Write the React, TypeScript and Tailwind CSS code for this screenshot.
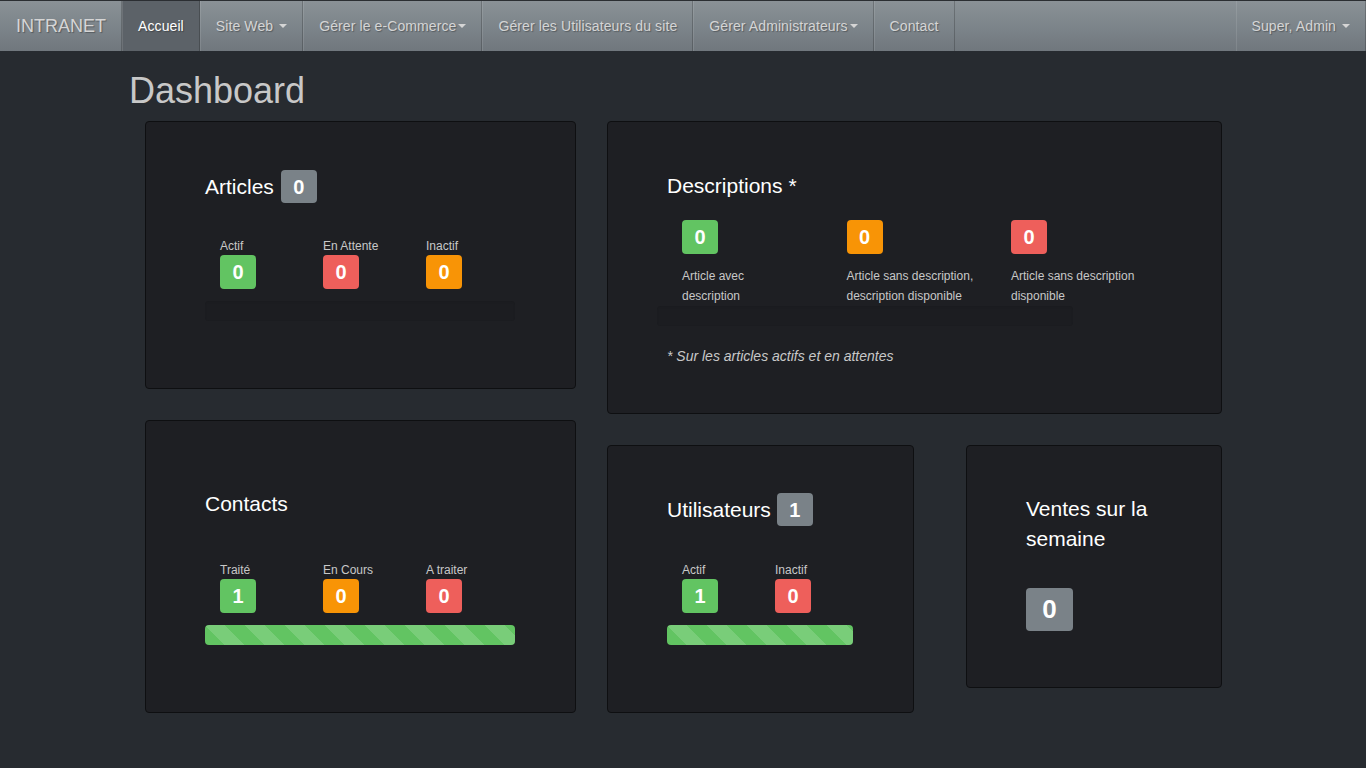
const font = "font-['Liberation_Sans',Arial,sans-serif]";

type Tone = 'green' | 'red' | 'orange' | 'gray';

const toneClass: Record<Tone, string> = {
  green: 'bg-[#62c462]',
  red: 'bg-[#ee5f5b]',
  orange: 'bg-[#f89406]',
  gray: 'bg-[#7a8288]',
};

function Badge({ value, tone }: { value: number; tone: Tone }) {
  return (
    <span
      className={`flex h-[34px] w-[36px] items-center justify-center rounded-[4px] text-[20px] font-bold text-white ${toneClass[tone]}`}
    >
      {value}
    </span>
  );
}

function Caret() {
  return (
    <span className="ml-[2px] inline-block h-0 w-0 border-x-[4px] border-t-[4px] border-x-transparent border-t-current align-middle" />
  );
}

function NavItem({ label, caret, space, active }: { label: string; caret?: boolean; space?: boolean; active?: boolean }) {
  return (
    <a
      className={`flex h-full items-center border-l border-l-[rgba(255,255,255,0.1)] border-r border-r-[rgba(0,0,0,0.2)] px-[15px] text-[14px] tracking-[0.1px] [text-shadow:1px_1px_1px_rgba(0,0,0,0.3)] ${
        active ? 'bg-[#5c6268] text-white' : 'text-[#d5d5d5]'
      }`}
    >
      {label}
      {caret && (space ? <span className="w-[4px]" /> : null)}
      {caret && <Caret />}
    </a>
  );
}

function Stat({ label, value, tone, narrow }: { label: string; value: number; tone: Tone; narrow?: boolean }) {
  return (
    <div className={`${narrow ? 'w-[93px]' : 'w-[103px]'} shrink-0`}>
      <div className="text-[12px] leading-[17px] text-[#c8c8c8]">{label}</div>
      <Badge value={value} tone={tone} />
    </div>
  );
}

function Progress({ full, className = '' }: { full?: boolean; className?: string }) {
  return (
    <div className={`h-[20px] overflow-hidden rounded-[4px] bg-[#1c1d21] shadow-[inset_0_1px_2px_rgba(0,0,0,0.08)] ${className}`}>
      {full && (
        <div className="h-full w-full bg-[#62c462] bg-[linear-gradient(45deg,rgba(255,255,255,.15)_25%,transparent_25%,transparent_50%,rgba(255,255,255,.15)_50%,rgba(255,255,255,.15)_75%,transparent_75%,transparent)] bg-[length:40px_40px]" />
      )}
    </div>
  );
}

function Card({ className = '', children }: { className?: string; children: React.ReactNode }) {
  return (
    <div className={`rounded-[4px] border border-[#0e0f11] bg-[#1e1f23] px-[59px] ${className}`}>{children}</div>
  );
}

export default function App() {
  return (
    <div className={`min-h-screen bg-[#272b30] ${font}`}>
      {/* Navbar */}
      <nav className="flex h-[51px] border-t border-t-[#2b2e32] bg-[linear-gradient(#8a9196,#7a8288_60%,#70777d)]">
        <a className="flex h-full items-center border-r border-r-[rgba(0,0,0,0.2)] pl-[16px] pr-[15px] text-[18px] text-[#d5d5d5] [text-shadow:1px_1px_1px_rgba(0,0,0,0.3)]">
          INTRANET
        </a>
        <NavItem label="Accueil" active />
        <NavItem label="Site Web" caret space />
        <NavItem label="Gérer le e-Commerce" caret />
        <NavItem label="Gérer les Utilisateurs du site" />
        <NavItem label="Gérer Administrateurs" caret />
        <NavItem label="Contact" />
        <div className="flex-1" />
        <NavItem label="Super, Admin" caret space />
      </nav>

      <h1 className="pl-[129px] pt-[20px] text-[36px] leading-[40px] text-[#c8c8c8]">Dashboard</h1>

      <div className="mt-[10px] flex gap-[31px] pl-[145px] pb-[54px]">
        {/* Left column */}
        <div className="flex w-[431px] flex-col gap-[31px]">
          <Card className="h-[268px] pt-[48px]">
            <div className="flex h-[33px] items-center gap-[7px]">
              <span className="text-[21px] text-white">Articles</span>
              <span className="flex h-[33px] w-[36px] items-center justify-center rounded-[4px] bg-[#7a8288] text-[20px] font-bold text-white">0</span>
            </div>
            <div className="mt-[35px] flex pl-[15px]">
              <Stat label="Actif" value={0} tone="green" />
              <Stat label="En Attente" value={0} tone="red" />
              <Stat label="Inactif" value={0} tone="orange" />
            </div>
            <Progress className="mt-[12px] w-[310px]" />
          </Card>

          <Card className="h-[293px] pt-[66px]">
            <div className="flex h-[33px] items-center">
              <span className="text-[21px] text-white">Contacts</span>
            </div>
            <div className="mt-[42px] flex pl-[15px]">
              <Stat label="Traité" value={1} tone="green" />
              <Stat label="En Cours" value={0} tone="orange" />
              <Stat label="A traiter" value={0} tone="red" />
            </div>
            <Progress full className="mt-[12px] w-[310px]" />
          </Card>
        </div>

        {/* Right column */}
        <div className="flex w-[615px] flex-col gap-[31px]">
          <Card className="h-[293px] pt-[47px]">
            <div className="flex h-[33px] items-center">
              <span className="text-[21px] text-white">Descriptions *</span>
            </div>
            <div className="mt-[18px] flex pl-[15px]">
              {[
                { v: 0, t: 'green' as Tone, a: 'Article avec', b: 'description' },
                { v: 0, t: 'orange' as Tone, a: 'Article sans description,', b: 'description disponible' },
                { v: 0, t: 'red' as Tone, a: 'Article sans description', b: 'disponible' },
              ].map((d, i) => (
                <div key={i} className="w-[164.5px] shrink-0">
                  <Badge value={d.v} tone={d.t} />
                  <p className="mt-[12px] text-[12px] leading-[20px] text-[#c8c8c8]">
                    {d.a}
                    <br />
                    {d.b}
                  </p>
                </div>
              ))}
            </div>
            <Progress className="-ml-[10px] w-[416px]" />
            <p className="mt-[20px] text-[14px] italic leading-[20px] text-[#c8c8c8]">
              * Sur les articles actifs et en attentes
            </p>
          </Card>

          <div className="flex items-start gap-[52px]">
            <Card className="h-[268px] w-[307px] pt-[47px]">
              <div className="flex h-[33px] items-center gap-[6px]">
                <span className="text-[21px] text-white">Utilisateurs</span>
                <span className="flex h-[33px] w-[36px] items-center justify-center rounded-[4px] bg-[#7a8288] text-[20px] font-bold text-white">1</span>
              </div>
              <div className="mt-[36px] flex pl-[15px]">
                <Stat label="Actif" value={1} tone="green" narrow />
                <Stat label="Inactif" value={0} tone="red" narrow />
              </div>
              <Progress full className="mt-[12px] w-[186px]" />
            </Card>

            <Card className="h-[243px] w-[256px] pt-[48px]">
              <div className="text-[21px] leading-[30px] text-white">Ventes sur la semaine</div>
              <span className="mt-[34px] flex h-[43px] w-[47px] items-center justify-center rounded-[4px] bg-[#7a8288] text-[26px] font-bold text-white">
                0
              </span>
            </Card>
          </div>
        </div>
      </div>
    </div>
  );
}
